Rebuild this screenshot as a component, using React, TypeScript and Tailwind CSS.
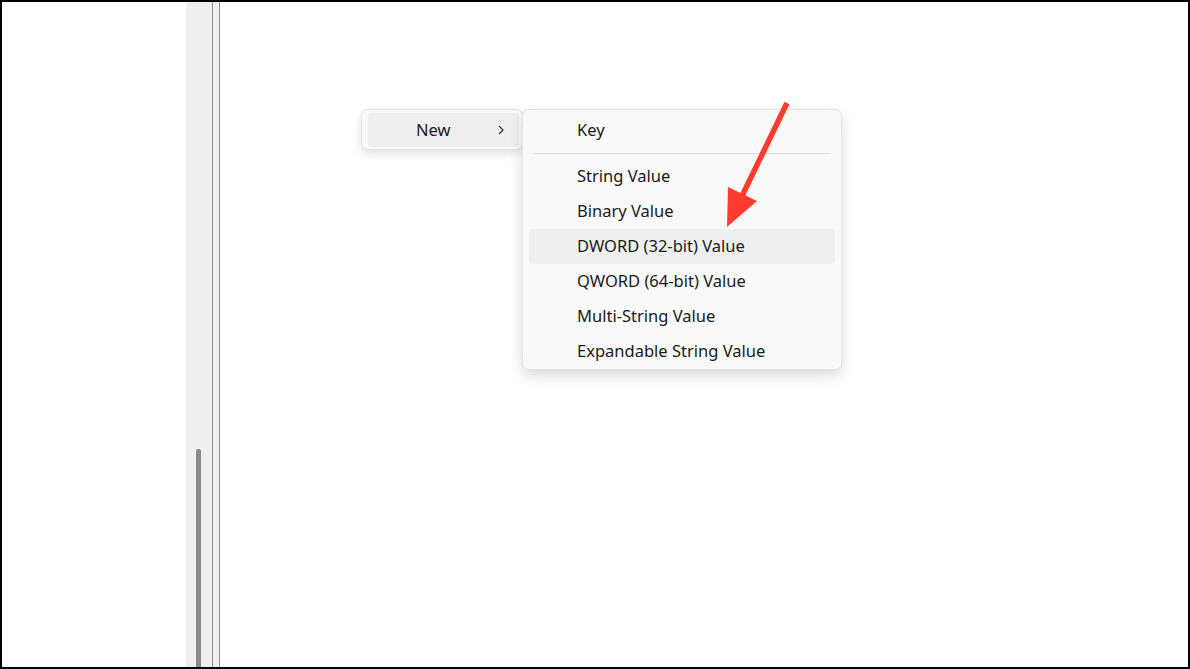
import React from "react";

const items = [
  "String Value",
  "Binary Value",
  "DWORD (32-bit) Value",
  "QWORD (64-bit) Value",
  "Multi-String Value",
  "Expandable String Value",
];

export default function App() {
  return (
    <div
      className="w-[1190px] h-[669px] border-2 border-black bg-white flex overflow-hidden"
      style={{ fontFamily: '"Noto Sans", "Open Sans", sans-serif' }}
    >
      <div className="w-[184px] h-full bg-white" />
      <div className="w-[26px] h-full bg-[#efefef] flex flex-col justify-end items-start pl-[10px]">
        <div className="w-[5px] h-[218px] bg-[#8a8a8a] rounded-t-[2px]" />
      </div>
      <div className="w-px h-full bg-[#8f8f9b]" />
      <div className="w-[6px] h-full bg-[#efefef]" />
      <div className="w-px h-full bg-[#8f8f9b]" />
      <div className="relative flex-1 h-full bg-white">
        {/* parent menu */}
        <div className="absolute left-[141px] top-[107px] w-[162px] h-[41px] bg-[#f9f9f9] border border-[#e3e3e3] rounded-[7px] shadow-[0_4px_10px_rgba(0,0,0,0.12)] p-[3px] pl-[6px]">
          <div className="h-[34px] w-[151px] rounded-[4px] bg-[#efefef] flex items-center relative">
            <span className="absolute left-[48px] text-[16.5px] text-[#1a1a1a] leading-none">New</span>
            <svg className="absolute left-[129px]" width="8" height="12" viewBox="0 0 8 12">
              <path d="M2 2 L6 6 L2 10" fill="none" stroke="#333" strokeWidth="1.2" />
            </svg>
          </div>
        </div>
        {/* submenu */}
        <div className="absolute left-[302px] top-[107px] w-[320px] h-[261px] bg-[#f9f9f9] border border-[#e3e3e3] rounded-[7px] shadow-[0_6px_14px_rgba(0,0,0,0.14)] pt-[3px] px-[6px]">
          <div className="h-[35px] flex items-center pl-[48px] text-[16.5px] text-[#1a1a1a]">Key</div>
          <div className="mx-[5px] my-[5px] h-px bg-[#dcdcdc]" />
          {items.map((t) => (
            <div
              key={t}
              className={`h-[35px] flex items-center pl-[48px] text-[16.5px] text-[#1a1a1a] rounded-[4px] ${
                t.startsWith("DWORD") ? "bg-[#efefef]" : ""
              }`}
            >
              {t}
            </div>
          ))}
        </div>
        {/* arrow */}
        <svg className="absolute left-0 top-0" width="968" height="665" viewBox="0 0 968 665">
          <g transform="translate(-220,-2)">
            <line x1="787" y1="103" x2="742" y2="196" stroke="#ff3b30" strokeWidth="5.5" />
            <polygon points="728,187 757,201 727,227" fill="#ff3b30" />
          </g>
        </svg>
      </div>
    </div>
  );
}
